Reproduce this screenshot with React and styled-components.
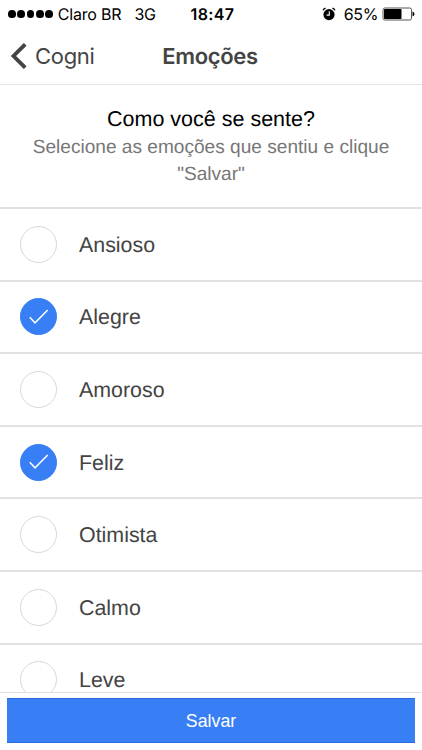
import React, { useState } from "react"
import styled, { createGlobalStyle } from "styled-components"

const colors = {
  blue: "#387ef5",
  darkBlue: "#2a6bdb",
  text: "#444",
  muted: "#777",
}

const systemFont = `Inter, "Liberation Sans", sans-serif`
const contentFont = `"Liberation Sans", Arial, sans-serif`

const GlobalStyle = createGlobalStyle`
  * {
    box-sizing: border-box;
  }

  body {
    margin: 0;
    background: white;
    -webkit-font-smoothing: antialiased;
    text-rendering: geometricPrecision;
  }
`

const Screen = styled.div`
  display: flex;
  flex-direction: column;
  height: 750px;
  overflow: hidden;
  font-family: ${contentFont};
  color: ${colors.text};
`

const StatusBar = styled.div`
  display: grid;
  grid-template-columns: 1fr auto 1fr;
  align-items: center;
  flex: none;
  height: 28px;
  padding: 0 7px 0 8px;
  font-family: ${systemFont};
  font-size: 16px;
  line-height: 28px;
  color: black;
`

const Carrier = styled.div`
  display: flex;
  align-items: center;
  white-space: nowrap;
  letter-spacing: -0.2px;
`

const Dots = styled.div`
  display: flex;
  gap: 1.6px;
  margin-right: 5px;
`

const Dot = styled.span`
  width: 7.7px;
  height: 7.7px;
  border-radius: 50%;
  background: black;
`

const Network = styled.span`
  margin-left: 13px;
`

const Clock = styled.div`
  padding-left: 2px;
  font-weight: 600;
  letter-spacing: 0.4px;
`

const Indicators = styled.div`
  display: flex;
  align-items: center;
  justify-content: flex-end;
  letter-spacing: -0.4px;
`

const AlarmIcon = styled.svg`
  width: 14px;
  height: 14px;
  margin-right: 8px;
`

const BatteryIcon = styled.svg`
  width: 33px;
  height: 14px;
  margin-left: 4px;
`

const NavBar = styled.header`
  display: grid;
  grid-template-columns: 1fr auto 1fr;
  align-items: center;
  flex: none;
  height: 57px;
  padding: 0 11px;
  border-bottom: 1px solid #e4e4e4;
  font-family: ${systemFont};
`

const BackButton = styled.button`
  display: flex;
  align-items: center;
  justify-self: start;
  padding: 0;
  border: 0;
  background: none;
  font: 400 22px ${systemFont};
  letter-spacing: -0.3px;
  color: ${colors.text};
`

const BackIcon = styled.svg`
  width: 16px;
  height: 26px;
  margin-right: 8px;
`

const Title = styled.h1`
  margin: 0;
  padding: 1px 2px 0 0;
  font-size: 22px;
  font-weight: 600;
  letter-spacing: -0.3px;
`

const Intro = styled.section`
  flex: none;
  height: 122px;
  padding: 20px 16px 0;
  text-align: center;
`

const Question = styled.h2`
  margin: 0;
  font-size: 21.5px;
  font-weight: 400;
  line-height: 28px;
  color: black;
`

const Hint = styled.p`
  margin: 1px 0 0;
  font-size: 19.1px;
  line-height: 27px;
  color: ${colors.muted};
`

const List = styled.ul`
  flex: 1;
  min-height: 0;
  margin: 0;
  padding: 0;
  overflow: hidden;
  list-style: none;
`

const Item = styled.li`
  display: flex;
  align-items: center;
  height: 72.6px;
  padding-left: 20px;
  border-top: 2px solid #e1e1e1;
  font-size: 21.4px;
  cursor: pointer;
`

const Label = styled.span`
  padding-top: 2px;
`

const Check = styled.span`
  display: flex;
  align-items: center;
  justify-content: center;
  width: 37px;
  height: 37px;
  margin-right: 22px;
  border: 1px solid ${props => (props.checked ? colors.blue : "#d8d8d8")};
  border-radius: 50%;
  background: ${props => (props.checked ? colors.blue : "white")};
`

const Footer = styled.footer`
  flex: none;
  height: 58px;
  padding: 5px 7px 0;
  border-top: 1px solid #e0e0e0;
`

const SaveButton = styled.button`
  display: block;
  width: 100%;
  height: 45px;
  padding: 2px 0 0;
  border: solid ${colors.darkBlue};
  border-width: 1px 0;
  background: ${colors.blue};
  font: 400 17.8px ${contentFont};
  color: white;
`

const emotions = [
  "Ansioso",
  "Alegre",
  "Amoroso",
  "Feliz",
  "Otimista",
  "Calmo",
  "Leve",
]

const Emotion = ({ name, checked, onToggle }) => (
  <Item onClick={onToggle}>
    <Check checked={checked}>
      {checked && (
        <svg width="20" height="16" viewBox="0 0 20 16" fill="none">
          <path d="M.8 8.2 6 13.8 18.7 1" stroke="white" strokeWidth="1.5" />
        </svg>
      )}
    </Check>
    <Label>{name}</Label>
  </Item>
)

const App = () => {
  const [selected, setSelected] = useState(["Alegre", "Feliz"])

  const toggle = name =>
    setSelected(
      selected.includes(name)
        ? selected.filter(item => item !== name)
        : [...selected, name]
    )

  return (
    <Screen>
      <GlobalStyle />
      <StatusBar>
        <Carrier>
          <Dots>
            {[1, 2, 3, 4, 5].map(dot => (
              <Dot key={dot} />
            ))}
          </Dots>
          Claro BR
          <Network>3G</Network>
        </Carrier>
        <Clock>18:47</Clock>
        <Indicators>
          <AlarmIcon viewBox="0 0 14 14" fill="none">
            <circle cx="7" cy="7.6" r="5.6" fill="black" />
            <path
              d="M1 3.4Q1.6 1.7 3.6 1.1M13 3.4Q12.4 1.7 10.4 1.1"
              stroke="black"
              strokeWidth="1.3"
            />
            <path d="M7.3 4.3v3.8H4.6" stroke="white" strokeWidth="1.1" />
          </AlarmIcon>
          65%
          <BatteryIcon viewBox="0 0 33 14" fill="none">
            <rect x="1" y="1" width="28.5" height="12" rx="1.8" stroke="#555" />
            <rect x="2" y="2" width="17.5" height="10" rx="0.8" fill="black" />
            <path d="M30.5 4.5q2 .8 2 2.5t-2 2.5z" fill="black" />
          </BatteryIcon>
        </Indicators>
      </StatusBar>
      <NavBar>
        <BackButton>
          <BackIcon viewBox="0 0 16 26" fill="none">
            <path d="M14.2 1.3 2.5 13l11.7 11.7" stroke="#444" strokeWidth="3.8" />
          </BackIcon>
          Cogni
        </BackButton>
        <Title>Emoções</Title>
      </NavBar>
      <Intro>
        <Question>Como você se sente?</Question>
        <Hint>Selecione as emoções que sentiu e clique "Salvar"</Hint>
      </Intro>
      <List>
        {emotions.map(name => (
          <Emotion
            key={name}
            name={name}
            checked={selected.includes(name)}
            onToggle={() => toggle(name)}
          />
        ))}
      </List>
      <Footer>
        <SaveButton>Salvar</SaveButton>
      </Footer>
    </Screen>
  )
}

export default App
